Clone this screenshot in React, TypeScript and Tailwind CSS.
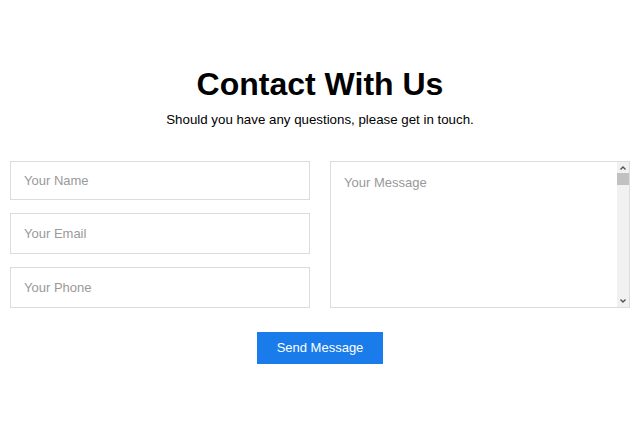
export default function App() {
  return (
    <div className="min-h-screen bg-white font-['Liberation_Sans',Arial,sans-serif] text-black">
      <section className="px-[10px] pt-[65px]">
        <h1 className="text-center text-[32px] font-bold leading-[38px]">Contact With Us</h1>
        <p className="mt-[9px] text-center text-[13.3px] leading-[16px]">
          Should you have any questions, please get in touch.
        </p>

        <form className="mt-[33px]" onSubmit={(e) => e.preventDefault()}>
          <div className="grid grid-cols-2 gap-[20px]">
            <div className="flex flex-col gap-[13px]">
              <input
                type="text"
                placeholder="Your Name"
                className="h-[39px] w-full border border-[#dcdcdc] px-[13px] text-[13px] outline-none placeholder:text-[#999]"
              />
              <input
                type="email"
                placeholder="Your Email"
                className="h-[41px] w-full border border-[#dcdcdc] px-[13px] text-[13px] outline-none placeholder:text-[#999]"
              />
              <input
                type="tel"
                placeholder="Your Phone"
                className="h-[41px] w-full border border-[#dcdcdc] px-[13px] text-[13px] outline-none placeholder:text-[#999]"
              />
            </div>
            <div className="relative">
              <textarea
                placeholder="Your Message"
                className="block h-full w-full resize-none overflow-hidden border border-[#dcdcdc] py-[13px] pl-[13px] pr-[24px] text-[13px] leading-[16px] outline-none placeholder:text-[#999]"
              />
              {/* fake classic scrollbar */}
              <div className="pointer-events-none absolute bottom-[1px] right-[1px] top-[1px] flex w-[12px] flex-col items-center bg-[#f1f1f1]">
                <svg width="8" height="10" viewBox="0 0 8 10" className="mt-[1px]">
                  <path d="M1.5 6.5 L4 4 L6.5 6.5" fill="none" stroke="#505050" strokeWidth="1.4" />
                </svg>
                <div className="h-[12px] w-full bg-[#c1c1c1]" />
                <div className="flex-1" />
                <svg width="8" height="10" viewBox="0 0 8 10" className="mb-[1px]">
                  <path d="M1.5 3.5 L4 6 L6.5 3.5" fill="none" stroke="#505050" strokeWidth="1.4" />
                </svg>
              </div>
            </div>
          </div>

          <div className="mt-[24px] flex justify-center">
            <button
              type="submit"
              className="h-[32px] w-[126px] bg-[#1a7bea] text-[13px] text-white"
            >
              Send Message
            </button>
          </div>
        </form>
      </section>
    </div>
  );
}
